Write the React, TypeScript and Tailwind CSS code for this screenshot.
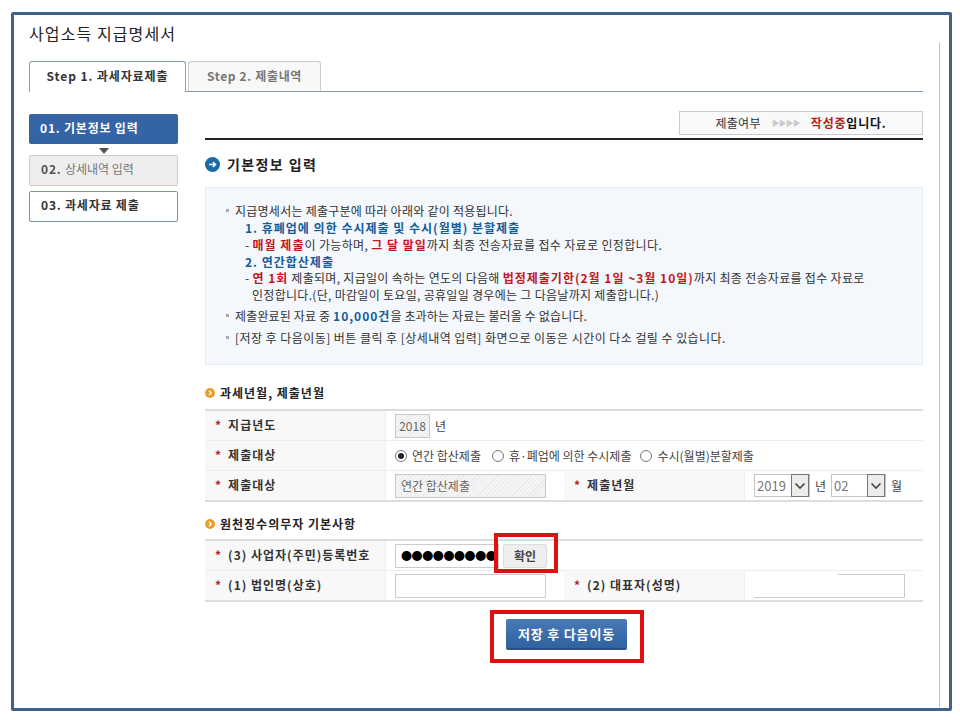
import { ReactNode } from "react";
import clsx from "clsx";

const Red = ({ children }: { children: ReactNode }) => <b className="font-bold tracking-[1px] text-[#c4161c]">{children}</b>;
const Blue = ({ children }: { children: ReactNode }) => <b className="font-bold tracking-[1px] text-[#135c9a]">{children}</b>;

function Bullet({ children, className }: { children: ReactNode; className?: string }) {
  return (
    <div className={clsx("flex h-[17px] items-center", className)}>
      <span className="mr-[6px] h-[3px] w-[3px] shrink-0 bg-[#aaaaaa]" />
      <span>{children}</span>
    </div>
  );
}

function Line({ children, indent }: { children: ReactNode; indent: string }) {
  return <div className={clsx("h-[16.8px] leading-[17px]", indent)}>{children}</div>;
}

function SectionTitle({ children, className }: { children: ReactNode; className?: string }) {
  return (
    <div className={clsx("flex items-center gap-[5px] text-[12px] font-bold tracking-[1px] text-[#222222]", className)}>
      <svg width="10" height="10" viewBox="0 0 10 10">
        <circle cx="5" cy="5" r="5" fill="#eb9d2c" />
        <path d="M4 2.8 6.2 5 4 7.2" fill="none" stroke="#ffffff" strokeWidth="1.3" />
      </svg>
      {children}
    </div>
  );
}

function Label({ children, last }: { children: ReactNode; last?: boolean }) {
  return (
    <div className={clsx("flex items-center bg-[#f8f8f8] pb-[2px] pl-[10px] text-[12px] font-bold tracking-[1px] text-[#333333]", !last && "border-b border-[#eeeeee]")}>
      <span className="mr-[6px] text-[12px] leading-none text-[#b3202a]">*</span>
      {children}
    </div>
  );
}

function Value({ children, last, className }: { children?: ReactNode; last?: boolean; className?: string }) {
  return (
    <div className={clsx("flex items-center border-l border-[#eeeeee] pl-[9px] text-[12px] text-[#444444]", !last && "border-b", className)}>
      {children}
    </div>
  );
}

function Radio({ on }: { on?: boolean }) {
  return (
    <span className="mr-[5px] flex h-[12px] w-[12px] items-center justify-center rounded-full border border-[#777777] bg-white">
      {on ? <span className="h-[6px] w-[6px] rounded-full bg-[#222222]" /> : null}
    </span>
  );
}

function FakeSelect({ value, width }: { value: string; width: string }) {
  return (
    <div className={clsx("flex h-[23px] items-center justify-between border border-[#c4c4c4] pl-[2px] text-[13px] text-[#777777]", width)}>
      {value}
      <span className="flex h-[23px] w-[18px] items-center justify-center border border-[#777777] bg-[#ececec]">
        <svg width="12" height="8" viewBox="0 0 12 8">
          <path d="M1.5 1.5 6 6l4.5-4.5" fill="none" stroke="#444444" strokeWidth="1.6" />
        </svg>
      </span>
    </div>
  );
}

const hatch =
  "border border-[#c9c9c9] bg-[repeating-linear-gradient(135deg,#e9e9e9_0px,#e9e9e9_1px,#f6f6f6_1px,#f6f6f6_3px)]";

export default function App() {
  return (
    <div className="h-[720px] w-[960px] bg-white pl-[11px] pt-[12px] text-[#333333] [font-family:'Noto_Sans_CJK_KR','Liberation_Sans',sans-serif]">
      <div className="flex h-[699px] w-[941px] rounded-[2px] border-[3px] border-[#3f618c] pl-[15px]">
        <div className="w-[894px] shrink-0">
          <h1 className="mt-[6px] h-[24px] text-[16px] font-normal leading-[24px] tracking-[1.1px] text-[#222222]">사업소득 지급명세서</h1>

          <div className="mt-[16px] flex h-[31px] items-end border-b border-[#7d9ab8]">
            <div className="mb-[-1px] flex h-[31px] w-[157px] items-center justify-center rounded-t-[3px] border border-b-0 border-[#7d9fc9] bg-white pb-[2px] text-[12px] font-bold tracking-[0.9px] text-[#333333]">
              Step 1. 과세자료제출
            </div>
            <div className="ml-[2px] flex h-[30px] w-[133px] items-center justify-center rounded-t-[3px] border border-b-0 border-[#cccccc] bg-[#f8f8f8] pb-[2px] text-[12px] font-bold tracking-[0.65px] text-[#777777]">
              Step 2. 제출내역
            </div>
          </div>

          <div className="flex">
            <aside className="mt-[22px] w-[149px] shrink-0 text-[12px] font-bold tracking-[0.8px]">
              <div className="flex h-[30px] items-center rounded-[2px] bg-[#3564a6] pb-[2px] pl-[11px] text-white">01. 기본정보 입력</div>
              <div className="mx-auto mb-[1px] mt-[4px] h-0 w-0 border-x-[5px] border-t-[6px] border-x-transparent border-t-[#555555]" />
              <div className="flex h-[31px] items-center rounded-[2px] border border-[#cccccc] bg-[#eeeeee] pb-[3px] pl-[11px] text-[#555555]">
                02.&nbsp;<span className="font-normal tracking-normal text-[#777777]">상세내역 입력</span>
              </div>
              <div className="mt-[5px] flex h-[31px] items-center rounded-[2px] border border-[#6f93c0] bg-white pb-[3px] pl-[11px] text-[#333333]">03. 과세자료 제출</div>
            </aside>

            <main className="ml-[27px] w-[718px]">
              <div className="mt-[19px] flex h-[29px] justify-end border-b-2 border-[#222222] pb-[4px]">
                <div className="flex h-[24px] w-[244px] items-center justify-center border border-[#cccccc] bg-[#f9f9f9] text-[12px] text-[#333333]">
                  <span className="tracking-[0.3px]">제출여부</span>
                  <span className="mx-[11px] text-[8px] tracking-[-1px] text-[#cccccc]">▶▶▶▶</span>
                  <b className="font-bold tracking-[0.8px] text-[#c4161c]">작성중</b>
                  <b className="font-bold tracking-[0.8px] text-[#111111]">입니다.</b>
                </div>
              </div>

              <div className="mt-[15px] flex h-[18px] items-center gap-[7px] text-[14px] font-bold tracking-[1.4px] text-[#222222]">
                <svg width="15" height="15" viewBox="0 0 14 14">
                  <circle cx="7" cy="7" r="7" fill="#1b6aa8" />
                  <path d="M3.8 7h6M7.4 4.8 9.8 7 7.4 9.2" fill="none" stroke="#ffffff" strokeWidth="1.4" />
                </svg>
                기본정보 입력
              </div>

              <div className="mt-[14px] h-[178px] border border-[#e6ebf0] bg-[#f4f7fb] pl-[20px] pt-[14px] text-[12px] leading-[17px] tracking-[0.25px] text-[#333333]">
                <Bullet>지급명세서는 제출구분에 따라 아래와 같이 적용됩니다.</Bullet>
                <Line indent="pl-[19px]"><Blue>1. 휴폐업에 의한 수시제출 및 수시(월별) 분할제출</Blue></Line>
                <Line indent="pl-[19px] tracking-[0.35px]">- <Red>매월 제출</Red>이 가능하며, <Red>그 달 말일</Red>까지 최종 전송자료를 접수 자료로 인정합니다.</Line>
                <Line indent="pl-[19px]"><Blue>2. 연간합산제출</Blue></Line>
                <Line indent="pl-[19px] tracking-[0.3px]">- <Red>연 1회</Red> 제출되며, 지급일이 속하는 연도의 다음해 <Red>법정제출기한(2월 1일 ~3월 10일)</Red>까지 최종 전송자료를 접수 자료로</Line>
                <Line indent="pl-[26px] tracking-[0.3px]">인정합니다.(단, 마감일이 토요일, 공휴일일 경우에는 그 다음날까지 제출합니다.)</Line>
                <Bullet className="mt-[4px] tracking-[0.15px]">제출완료된 자료 중 <Blue>10,000건</Blue>을 초과하는 자료는 불러올 수 없습니다.</Bullet>
                <Bullet className="mt-[5px] tracking-[0.45px]">[저장 후 다음이동] 버튼 클릭 후 [상세내역 입력] 화면으로 이동은 시간이 다소 걸릴 수 있습니다.</Bullet>
              </div>

              <SectionTitle className="mt-[20px] h-[16px]">과세년월, 제출년월</SectionTitle>

              <div className="mt-[8px] grid grid-cols-[180px_179px_180px_179px] grid-rows-[30px_30px_29px] border-y-2 border-[#dddddd]">
                <Label>지급년도</Label>
                <Value className="col-span-3 border-[#eeeeee]">
                  <span className={clsx("flex h-[24px] w-[35px] items-center justify-center text-[#666666]", hatch)}>2018</span>
                  <span className="ml-[5px]">년</span>
                </Value>
                <Label>제출대상</Label>
                <Value className="col-span-3 border-[#eeeeee]">
                  <Radio on />
                  <span className="mr-[11px]">연간 합산제출</span>
                  <Radio />
                  <span className="mr-[9px]">휴·폐업에 의한 수시제출</span>
                  <Radio />
                  <span>수시(월별)분할제출</span>
                </Value>
                <Label last>제출대상</Label>
                <Value last>
                  <span className={clsx("flex h-[24px] w-[151px] items-center pl-[5px] text-[#666666]", hatch)}>연간 합산제출</span>
                </Value>
                <Label last>제출년월</Label>
                <Value last>
                  <FakeSelect value="2019" width="w-[56px]" />
                  <span className="mx-[5px]">년</span>
                  <FakeSelect value="02" width="w-[55px]" />
                  <span className="ml-[5px]">월</span>
                </Value>
              </div>

              <SectionTitle className="mt-[14px] h-[16px]">원천징수의무자 기본사항</SectionTitle>

              <div className="mt-[7px] grid grid-cols-[180px_179px_180px_179px] grid-rows-[30px_29px] border-y-2 border-[#dddddd]">
                <Label>(3) 사업자(주민)등록번호</Label>
                <Value className="col-span-3 border-[#eeeeee]">
                  <span className="flex h-[24px] w-[104px] items-center overflow-hidden whitespace-nowrap border border-[#cccccc] pl-[5px] text-[11px] tracking-[-0.4px] text-black">●●●●●●●●●●</span>
                  <span className="ml-[4px] flex h-[24px] w-[44px] items-center justify-center rounded-[2px] border border-[#dddddd] bg-[#eeeeee] font-bold text-[#444444]">확인</span>
                </Value>
                <Label last>(1) 법인명(상호)</Label>
                <Value last>
                  <span className="h-[24px] w-[151px] border border-[#cccccc] bg-white" />
                </Value>
                <Label last>(2) 대표자(성명)</Label>
                <Value last>
                  <span className="block h-[24px] w-[151px] border-b border-r border-[#cccccc] bg-white">
                    <span className="ml-[84px] block h-px bg-[#cccccc]" />
                  </span>
                </Value>
              </div>

              <div className="ml-[5px] mt-[17px] flex justify-center">
                <div className="flex h-[31px] w-[121px] items-center justify-center rounded-[2px] border-b-2 border-[#2c5282] bg-gradient-to-b from-[#4a7ab8] to-[#2f62a0] text-[13px] font-bold tracking-[0.8px] text-white">
                  저장 후 다음이동
                </div>
              </div>
            </main>
          </div>
        </div>
        <div className="ml-[16px] mt-[27px] h-[665px] w-px bg-[#e3bd84]" />
      </div>

      <div className="absolute left-[490px] top-[610px] h-[53px] w-[154px] border-4 border-[#e00f12]" />
      <div className="absolute left-[494px] top-[533px] h-[40px] w-[64px] border-4 border-[#e00f12]" />
    </div>
  );
}
